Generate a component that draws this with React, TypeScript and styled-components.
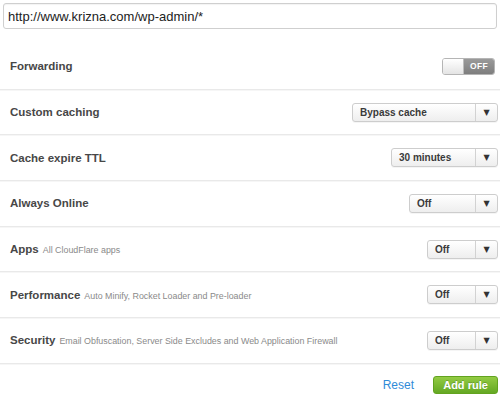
import React from "react";
import styled, { createGlobalStyle } from "styled-components";

const GlobalStyle = createGlobalStyle`
  html, body {
    margin: 0;
    padding: 0;
    background: #fff;
  }
  body {
    font-family: "Liberation Sans", Arial, sans-serif;
    color: #444;
  }
`;

const Page = styled.div`
  width: 500px;
  padding-top: 3px;
  box-sizing: border-box;
`;

const UrlInput = styled.input`
  display: block;
  box-sizing: border-box;
  margin: 0 3px;
  width: 494px;
  height: 26px;
  padding: 0 5px 0 4px;
  border: 1px solid #cfcfcf;
  border-radius: 3px;
  box-shadow: inset 0 1px 1px rgba(0, 0, 0, 0.05);
  font-family: "Liberation Sans", Arial, sans-serif;
  font-size: 13px;
  color: #222;
  outline: none;
`;

const RuleList = styled.div`
  margin-top: 15px;
`;

const Row = styled.div`
  display: flex;
  align-items: center;
  justify-content: space-between;
  box-sizing: border-box;
  height: 45.7px;
  padding: 0 2px 0 10px;
  border-bottom: 1px solid #e9e9e9;
  box-shadow: 0 1px 0 #f6f6f6;
`;

const Label = styled.div`
  font-size: 11.5px;
  font-weight: bold;
  color: #474747;
  white-space: nowrap;
`;

const Desc = styled.span`
  margin-left: 4px;
  font-size: 8.9px;
  font-weight: normal;
  color: #8a8a8a;
`;

const SelectBox = styled.div<{ $width: number }>`
  display: flex;
  box-sizing: border-box;
  width: ${(p) => p.$width}px;
  height: 19px;
  border: 1px solid #cdcdcd;
  border-radius: 3px;
  background: linear-gradient(#ffffff, #eeeeee);
  box-shadow: 0 1px 0 rgba(0, 0, 0, 0.04);
`;

const SelectValue = styled.div`
  flex: 1;
  display: flex;
  align-items: center;
  padding-left: 7px;
  font-size: 10px;
  font-weight: bold;
  color: #3a3a3a;
`;

const SelectArrow = styled.div`
  width: 21px;
  display: flex;
  align-items: center;
  justify-content: center;
  border-left: 1px solid #d2d2d2;
  font-family: "DejaVu Sans", sans-serif;
  font-size: 8px;
  color: #333;
`;

const ToggleTrack = styled.div`
  display: flex;
  width: 53px;
  height: 17px;
  margin-right: 3px;
  border-radius: 3px;
  overflow: hidden;
  border: 1px solid #b5b5b5;
  box-sizing: border-box;
`;

const ToggleKnob = styled.div`
  width: 20px;
  background: linear-gradient(#ffffff, #e4e4e4);
  border-right: 1px solid #bdbdbd;
`;

const ToggleState = styled.div`
  flex: 1;
  display: flex;
  align-items: center;
  justify-content: center;
  background: linear-gradient(#9a9a9a, #7e7e7e);
  color: #fff;
  font-size: 8.5px;
  font-weight: bold;
  letter-spacing: 0.3px;
`;

const Footer = styled.div`
  display: flex;
  justify-content: flex-end;
  align-items: center;
  gap: 19px;
  padding: 12px 2px 0 0;
`;

const ResetLink = styled.a`
  font-size: 12px;
  color: #2f8bd8;
  text-decoration: none;
  cursor: pointer;
`;

const AddButton = styled.button`
  box-sizing: border-box;
  width: 65px;
  height: 18px;
  padding: 0;
  border: 1px solid #62a31f;
  border-radius: 3px;
  background: linear-gradient(#93cb43, #64a823);
  color: #fff;
  font-family: "Liberation Sans", Arial, sans-serif;
  font-size: 11px;
  font-weight: bold;
  text-shadow: 0 -1px 0 rgba(0, 0, 0, 0.2);
  cursor: pointer;
`;

const Select = ({ value, width }: { value: string; width: number }) => (
  <SelectBox $width={width}>
    <SelectValue>{value}</SelectValue>
    <SelectArrow>▼</SelectArrow>
  </SelectBox>
);

const rules = [
  { label: "Custom caching", value: "Bypass cache", width: 146 },
  { label: "Cache expire TTL", value: "30 minutes", width: 107 },
  { label: "Always Online", value: "Off", width: 89 },
  { label: "Apps", desc: "All CloudFlare apps", value: "Off", width: 71 },
  {
    label: "Performance",
    desc: "Auto Minify, Rocket Loader and Pre-loader",
    value: "Off",
    width: 71,
  },
  {
    label: "Security",
    desc: "Email Obfuscation, Server Side Excludes and Web Application Firewall",
    value: "Off",
    width: 71,
  },
];

const App = () => {
  return (
    <Page>
      <GlobalStyle />
      <UrlInput readOnly value="http://www.krizna.com/wp-admin/*" />
      <RuleList>
        <Row>
          <Label>Forwarding</Label>
          <ToggleTrack>
            <ToggleKnob />
            <ToggleState>OFF</ToggleState>
          </ToggleTrack>
        </Row>
        {rules.map((rule) => (
          <Row key={rule.label}>
            <Label>
              {rule.label}
              {rule.desc && <Desc>{rule.desc}</Desc>}
            </Label>
            <Select value={rule.value} width={rule.width} />
          </Row>
        ))}
      </RuleList>
      <Footer>
        <ResetLink>Reset</ResetLink>
        <AddButton>Add rule</AddButton>
      </Footer>
    </Page>
  );
};

export default App;
